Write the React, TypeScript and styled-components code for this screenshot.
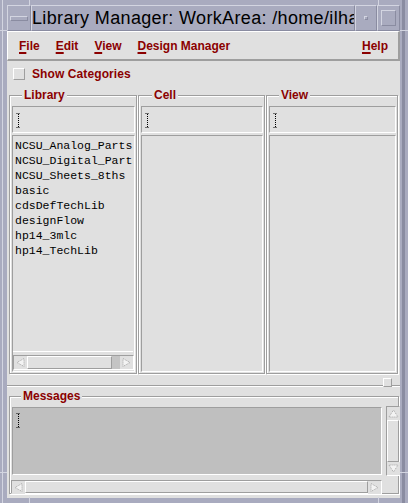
import styled, { createGlobalStyle } from "styled-components";

const GlobalStyle = createGlobalStyle`
  html, body {
    margin: 0;
    padding: 0;
    background: #a9abbf;
  }
  body {
    overflow: hidden;
  }
`;

const RED = "#8b0000";
const FACE = "#e0e0e0";
const SHADOW = "#9e9e9e";
const LIGHT = "#ffffff";
const FRAME = "#a9abbf";
const FRAME_LIGHT = "#d3d5e1";
const FRAME_DARK = "#8a8ca1";

const libraries = [
  "NCSU_Analog_Parts",
  "NCSU_Digital_Parts",
  "NCSU_Sheets_8ths",
  "basic",
  "cdsDefTechLib",
  "designFlow",
  "hp14_3mlc",
  "hp14_TechLib",
];

const menus = ["File", "Edit", "View", "Design Manager"];

type Dir = "left" | "right" | "up" | "down";

const arrowPoints: Record<Dir, string> = {
  left: "10,2.5 3,6.5 10,10.5",
  right: "3,2.5 10,6.5 3,10.5",
  up: "2,10 6.5,3 11,10",
  down: "2,3 6.5,10 11,3",
};

/* ---------- window frame ---------- */

const Window = styled.div`
  position: relative;
  width: 408px;
  height: 503px;
  box-sizing: border-box;
  padding: 0 8px 5px 7px;
  background: ${FRAME};
  box-shadow: inset -3px 0 0 ${FRAME}, inset -6px 0 0 ${FRAME_DARK},
    inset 2px 0 0 ${FRAME}, inset 3px 0 0 ${FRAME_LIGHT};
  display: flex;
  flex-direction: column;
  font-family: "Liberation Sans", Arial, sans-serif;
`;

const Tick = styled.div<{ $x?: number; $y?: number; $bottom?: boolean; $right?: boolean }>`
  position: absolute;
  background: ${FRAME_LIGHT};
  ${({ $x, $bottom }) =>
    $x !== undefined
      ? `left: ${$x}px; width: 1px; height: 6px; ${$bottom ? "bottom: 0;" : "top: 0;"}`
      : ""}
  ${({ $y, $right }) =>
    $y !== undefined
      ? `top: ${$y}px; height: 1px; width: 7px; ${$right ? "right: 0; width: 8px;" : "left: 0;"}`
      : ""}
`;

const TitleBar = styled.div`
  display: flex;
  height: 26px;
  margin-top: 5px;
`;

const TitleCell = styled.div<{ $w?: number }>`
  box-sizing: border-box;
  ${({ $w }) => ($w ? `width: ${$w}px; flex: none;` : "flex: 1; min-width: 0;")}
  border: 1px solid;
  border-color: ${FRAME_LIGHT} ${FRAME_DARK} ${FRAME_DARK} ${FRAME_LIGHT};
  display: flex;
  align-items: center;
  justify-content: center;
  overflow: hidden;
`;

const MenuBarGlyph = styled.div`
  width: 16px;
  height: 3px;
  border: 1px solid;
  border-color: ${FRAME_LIGHT} ${FRAME_DARK} ${FRAME_DARK} ${FRAME_LIGHT};
`;

const IconifyGlyph = styled.div`
  width: 2px;
  height: 2px;
  border: 1px solid;
  border-color: ${FRAME_LIGHT} ${FRAME_DARK} ${FRAME_DARK} ${FRAME_LIGHT};
`;

const MaximizeGlyph = styled.div`
  width: 13px;
  height: 14px;
  border: 1px solid;
  border-color: ${FRAME_LIGHT} ${FRAME_DARK} ${FRAME_DARK} ${FRAME_LIGHT};
`;

const TitleText = styled.div`
  width: 100%;
  white-space: nowrap;
  overflow: hidden;
  font-size: 18px;
  letter-spacing: 0.35px;
  color: #000;
`;

/* ---------- client area ---------- */

const Client = styled.div`
  flex: 1;
  display: flex;
  flex-direction: column;
  background: ${FACE};
  padding-bottom: 4px;
`;

const MenuBar = styled.div`
  height: 30px;
  box-sizing: border-box;
  display: flex;
  align-items: center;
  gap: 16px;
  padding: 0 10px 0 11px;
  border-style: solid;
  border-width: 1px 2px 2px 1px;
  border-color: ${LIGHT} ${SHADOW} ${SHADOW} ${LIGHT};
`;

const MenuItem = styled.span<{ $right?: boolean }>`
  font-size: 12px;
  font-weight: bold;
  color: ${RED};
  ${({ $right }) => ($right ? "margin-left: auto;" : "")}
`;

const Mnemonic = styled.span`
  text-decoration: underline;
  text-decoration-thickness: 2px;
  text-underline-offset: 2px;
`;

const CheckRow = styled.div`
  height: 26px;
  display: flex;
  align-items: center;
  gap: 7px;
  padding-left: 6px;
`;

const CheckBox = styled.div`
  width: 12px;
  height: 12px;
  box-sizing: border-box;
  border: 1px solid;
  border-color: ${LIGHT} ${SHADOW} ${SHADOW} ${LIGHT};
  background: ${FACE};
`;

const Label = styled.span`
  font-size: 12px;
  font-weight: bold;
  color: ${RED};
  letter-spacing: 0.1px;
`;

const Columns = styled.div`
  display: grid;
  grid-template-columns: 128px 127px 132px;
  column-gap: 1px;
  padding: 8px 2px 0;
`;

const Group = styled.div<{ $h: number }>`
  position: relative;
  height: ${({ $h }) => $h}px;
  box-sizing: border-box;
  border: 1px solid ${SHADOW};
  box-shadow: inset 1px 1px 0 ${LIGHT}, 1px 1px 0 ${LIGHT};
  display: flex;
  flex-direction: column;
`;

const ColumnGroup = styled(Group)`
  padding: 10px 1px 1px 2px;
  gap: 2px;
`;

const Legend = styled.span<{ $x: number }>`
  position: absolute;
  top: -8px;
  left: ${({ $x }) => $x}px;
  padding: 0 2px;
  background: ${FACE};
  font-size: 12px;
  font-weight: bold;
  color: ${RED};
  line-height: 14px;
`;

const Sunken = styled.div`
  box-sizing: border-box;
  border: 1px solid;
  border-color: ${SHADOW} ${LIGHT} ${LIGHT} ${SHADOW};
`;

const TextField = styled(Sunken)`
  height: 27px;
  flex: none;
  padding: 6px 0 0 3px;
`;

const ListPanel = styled(Sunken)`
  flex: 1;
  display: flex;
  flex-direction: column;
  min-height: 0;
`;

const ListArea = styled.div<{ $bordered?: boolean }>`
  flex: 1;
  overflow: hidden;
  padding: 2px 0 0 2px;
  margin-right: 1px;
  ${({ $bordered }) => ($bordered ? `border-bottom: 1px solid ${LIGHT};` : "")}
`;

const ListItem = styled.div`
  font-family: "Liberation Mono", "Courier New", monospace;
  font-size: 11.5px;
  line-height: 15px;
  color: #000;
  white-space: nowrap;
`;

const ScrollTrack = styled.div<{ $vertical?: boolean }>`
  display: flex;
  flex-direction: ${({ $vertical }) => ($vertical ? "column" : "row")};
  box-sizing: border-box;
  background: #c4c4c4;
  border: 1px solid;
  border-color: ${SHADOW} ${LIGHT} ${LIGHT} ${SHADOW};
`;

const LibScroll = styled(ScrollTrack)`
  height: 15px;
  margin: 3px 0 1px;
`;

const ArrowBox = styled.div`
  flex: none;
  width: 13px;
  height: 13px;
  background: ${FACE};
  display: flex;
`;

const Slider = styled.div<{ $fill: number }>`
  box-sizing: border-box;
  flex: 0 0 ${({ $fill }) => $fill}%;
  background: ${FACE};
  border: 1px solid;
  border-color: ${LIGHT} ${SHADOW} ${SHADOW} ${LIGHT};
`;

const Trough = styled.div<{ $vertical?: boolean }>`
  flex: 1;
  display: flex;
  flex-direction: ${({ $vertical }) => ($vertical ? "column" : "row")};
`;

const SashRow = styled.div`
  position: relative;
  height: 22px;
  display: flex;
  align-items: center;
`;

const SashLine = styled.div`
  flex: 1;
  height: 1px;
  margin-top: 1px;
  background: ${SHADOW};
  box-shadow: 0 1px 0 ${LIGHT};
`;

const SashHandle = styled.div`
  position: absolute;
  right: 8px;
  top: 4px;
  width: 9px;
  height: 9px;
  box-sizing: border-box;
  background: ${FACE};
  border: 1px solid;
  border-color: ${LIGHT} ${SHADOW} ${SHADOW} ${LIGHT};
`;

const MessagesGroup = styled(Group)`
  margin: 0 1px 0 2px;
  padding: 9px 1px 0 1px;
`;

const MessagesGrid = styled.div`
  display: grid;
  grid-template-columns: 371px 13px;
  grid-template-rows: 70px 13px;
  column-gap: 4px;
  row-gap: 4px;
`;

const MessageText = styled(Sunken)`
  margin: 1px 0 1px 1px;
  background: #bfbfbf;
  padding: 5px 0 0 3px;
`;

const VScroll = styled(ScrollTrack)`
  flex-direction: column;
  width: 14px;
`;

const HScroll = styled(ScrollTrack)`
  height: 14px;
`;

function Arrow({ dir }: { dir: Dir }) {
  return (
    <ArrowBox>
      <svg width="13" height="13" viewBox="0 0 13 13">
        <polygon
          points={arrowPoints[dir]}
          fill="#f3f3f3"
          stroke="#a6a6a6"
          strokeWidth="1"
          strokeDasharray="1 1"
        />
      </svg>
    </ArrowBox>
  );
}

function IBeam() {
  return (
    <svg width="5" height="15" viewBox="0 0 5 15">
      <path
        d="M0.5 0.5H4.5M2.5 1V14M0.5 14.5H4.5"
        stroke="#000"
        strokeWidth="1"
        strokeDasharray="1 1"
        fill="none"
      />
    </svg>
  );
}

function App() {
  return (
    <Window>
      <GlobalStyle />
      <Tick $x={29} />
      <Tick $x={378} />
      <Tick $x={29} $bottom />
      <Tick $x={378} $bottom />
      <Tick $y={30} />
      <Tick $y={30} $right />
      <Tick $y={472} />
      <Tick $y={472} $right />

      <TitleBar>
        <TitleCell $w={24}>
          <MenuBarGlyph />
        </TitleCell>
        <TitleCell>
          <TitleText>Library Manager: WorkArea: /home/ilhan</TitleText>
        </TitleCell>
        <TitleCell $w={22}>
          <IconifyGlyph />
        </TitleCell>
        <TitleCell $w={23}>
          <MaximizeGlyph />
        </TitleCell>
      </TitleBar>

      <Client>
        <MenuBar>
          {menus.map((m) => (
            <MenuItem key={m}>
              <Mnemonic>{m[0]}</Mnemonic>
              {m.slice(1)}
            </MenuItem>
          ))}
          <MenuItem $right>
            <Mnemonic>H</Mnemonic>elp
          </MenuItem>
        </MenuBar>

        <CheckRow>
          <CheckBox />
          <Label>Show Categories</Label>
        </CheckRow>

        <Columns>
          <ColumnGroup $h={279}>
            <Legend $x={12}>Library</Legend>
            <TextField>
              <IBeam />
            </TextField>
            <ListPanel>
              <ListArea $bordered>
                {libraries.map((lib) => (
                  <ListItem key={lib}>{lib}</ListItem>
                ))}
              </ListArea>
              <LibScroll>
                <Arrow dir="left" />
                <Trough>
                  <Slider $fill={91} />
                </Trough>
                <Arrow dir="right" />
              </LibScroll>
            </ListPanel>
          </ColumnGroup>

          <ColumnGroup $h={279}>
            <Legend $x={13}>Cell</Legend>
            <TextField>
              <IBeam />
            </TextField>
            <ListPanel />
          </ColumnGroup>

          <ColumnGroup $h={279}>
            <Legend $x={12}>View</Legend>
            <TextField>
              <IBeam />
            </TextField>
            <ListPanel />
          </ColumnGroup>
        </Columns>

        <SashRow>
          <SashLine />
          <SashHandle />
        </SashRow>

        <MessagesGroup $h={98}>
          <Legend $x={11}>Messages</Legend>
          <MessagesGrid>
            <MessageText>
              <IBeam />
            </MessageText>
            <VScroll>
              <Arrow dir="up" />
              <Trough $vertical>
                <Slider $fill={100} />
              </Trough>
              <Arrow dir="down" />
            </VScroll>
            <HScroll>
              <Arrow dir="left" />
              <Trough>
                <Slider $fill={100} />
              </Trough>
              <Arrow dir="right" />
            </HScroll>
          </MessagesGrid>
        </MessagesGroup>
      </Client>
    </Window>
  );
}

export default App;
